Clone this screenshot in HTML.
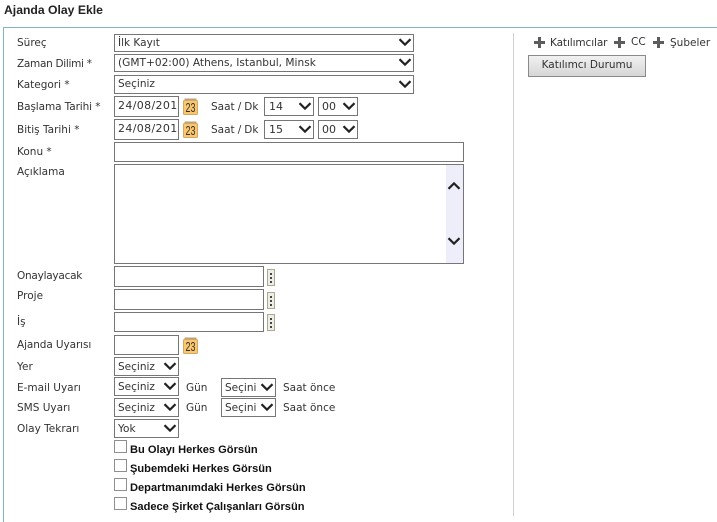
<!DOCTYPE html>
<html><head><meta charset="utf-8"><style>
html,body{margin:0;padding:0;background:#fff;width:717px;height:522px;overflow:hidden}
body{position:relative;font-family:"DejaVu Sans","Liberation Sans",sans-serif;font-size:10.5px;color:#333}
.a{position:absolute;white-space:nowrap;line-height:14px;margin-top:1px}
svg.a{margin-top:0}
.b{position:absolute;box-sizing:border-box;border:1px solid #767676;background:#fff;color:#333;white-space:nowrap;padding-left:3px;padding-top:1px;overflow:hidden}
.b svg{position:absolute;right:1px;top:50%;margin-top:-5px}
.l{left:17px}
.c{position:absolute;box-sizing:border-box;width:13px;height:13px;border:1px solid #8f8f8f;left:114px;background:#fff}
.k{position:absolute;left:130px;font-weight:bold;color:#111;white-space:nowrap;line-height:14px;font-family:"Liberation Sans",sans-serif;font-size:11.1px;margin-top:1px}
</style></head><body>
<svg width="0" height="0" style="position:absolute"><defs>
<symbol id="v" viewBox="0 0 14 8"><path d="M1.5 1.2 7 6.6 12.5 1.2" fill="none" stroke="#222" stroke-width="2.2"/></symbol>
<symbol id="cal" viewBox="0 0 15 17"><rect x="1.5" y="0.5" width="12" height="3" fill="#b9a27f"/><rect x="0.5" y="2.5" width="14" height="14" rx="1" fill="#fbc76e" stroke="#d3a860"/><text x="7.5" y="14" text-anchor="middle" font-family="Liberation Sans" font-size="13" textLength="10" lengthAdjust="spacingAndGlyphs" fill="#333">23</text></symbol>
<symbol id="dots" viewBox="0 0 8 17"><rect x=".5" y=".5" width="7" height="16" fill="#eeeee6" stroke="#a9a98f"/><rect x="3" y="4" width="2" height="2" fill="#444"/><rect x="3" y="8" width="2" height="2" fill="#444"/><rect x="3" y="12" width="2" height="2" fill="#444"/></symbol>
<symbol id="plus" viewBox="0 0 11 11"><path d="M4 0h3v4h4v3H7v4H4V7H0V4h4z" fill="#5c5c5c"/></symbol>
</defs></svg>

<div class="a" style="left:4px;top:2px;font-family:'Liberation Sans',sans-serif;font-weight:bold;font-size:12.2px;color:#222">Ajanda Olay Ekle</div>
<div style="position:absolute;left:3px;top:27px;width:714px;height:1px;background:#7fb6c2"></div>
<div style="position:absolute;left:3px;top:27px;width:1px;height:495px;background:#7fb6c2"></div>
<div style="position:absolute;left:513px;top:33px;width:1px;height:483px;background:#d0d0d0"></div>

<div class="a l" style="top:35px">Süreç</div>
<div class="a l" style="top:56px;letter-spacing:-.3px">Zaman Dilimi *</div>
<div class="a l" style="top:77px">Kategori *</div>
<div class="a l" style="top:99px;letter-spacing:-.1px">Başlama Tarihi *</div>
<div class="a l" style="top:122px">Bitiş Tarihi *</div>
<div class="a l" style="top:144px">Konu *</div>
<div class="a l" style="top:164px">Açıklama</div>
<div class="a l" style="top:268px;letter-spacing:-.25px">Onaylayacak</div>
<div class="a l" style="top:288px">Proje</div>
<div class="a l" style="top:314px">İş</div>
<div class="a l" style="top:337px;letter-spacing:-.1px">Ajanda Uyarısı</div>
<div class="a l" style="top:359px">Yer</div>
<div class="a l" style="top:380px">E-mail Uyarı</div>
<div class="a l" style="top:400px">SMS Uyarı</div>
<div class="a l" style="top:421px">Olay Tekrarı</div>

<div class="b" style="left:114px;top:34px;width:300px;height:18px;line-height:15px">İlk Kayıt<svg width="14" height="8"><use href="#v"/></svg></div>
<div class="b" style="left:114px;top:54px;width:300px;height:18px;line-height:15px;font-size:10.6px">(GMT+02:00) Athens, Istanbul, Minsk<svg width="14" height="8"><use href="#v"/></svg></div>
<div class="b" style="left:114px;top:75px;width:300px;height:19px;line-height:15px">Seçiniz<svg width="14" height="8"><use href="#v"/></svg></div>

<div class="b" style="left:114px;top:96px;width:65px;height:21px;line-height:16px;font-size:11px;letter-spacing:.35px;color:#333">24/08/201</div>
<svg class="a" style="left:183px;top:98px" width="15" height="17"><use href="#cal"/></svg>
<div class="a" style="left:211px;top:99px;word-spacing:-.3px">Saat / Dk</div>
<div class="b" style="left:264px;top:97px;width:50px;height:19px;line-height:15px;font-size:11px;padding-left:4px">14<svg width="14" height="8"><use href="#v"/></svg></div>
<div class="b" style="left:318px;top:97px;width:40px;height:19px;line-height:15px;font-size:11px">00<svg width="14" height="8"><use href="#v"/></svg></div>

<div class="b" style="left:114px;top:119px;width:65px;height:21px;line-height:16px;font-size:11px;letter-spacing:.35px;color:#333">24/08/201</div>
<svg class="a" style="left:183px;top:121px" width="15" height="17"><use href="#cal"/></svg>
<div class="a" style="left:211px;top:122px;word-spacing:-.3px">Saat / Dk</div>
<div class="b" style="left:264px;top:120px;width:50px;height:19px;line-height:15px;font-size:11px;padding-left:4px">15<svg width="14" height="8"><use href="#v"/></svg></div>
<div class="b" style="left:318px;top:120px;width:40px;height:19px;line-height:15px;font-size:11px">00<svg width="14" height="8"><use href="#v"/></svg></div>

<div class="b" style="left:114px;top:142px;width:350px;height:20px"></div>
<div class="b" style="left:114px;top:164px;width:350px;height:100px">
<div style="position:absolute;right:0;top:0;width:17px;height:98px;background:#eeeefb"></div>
<svg style="position:absolute;right:2px;top:17px;margin:0" width="14" height="8"><g transform="matrix(1 0 0 -1 0 8)"><use href="#v"/></g></svg>
<svg style="position:absolute;right:2px;top:72px;margin:0" width="14" height="8"><use href="#v"/></svg>
</div>

<div class="b" style="left:114px;top:266px;width:150px;height:21px"></div>
<svg class="a" style="left:267px;top:269px" width="8" height="17"><use href="#dots"/></svg>
<div class="b" style="left:114px;top:289px;width:150px;height:21px"></div>
<svg class="a" style="left:267px;top:292px" width="8" height="17"><use href="#dots"/></svg>
<div class="b" style="left:114px;top:312px;width:150px;height:20px"></div>
<svg class="a" style="left:267px;top:314px" width="8" height="17"><use href="#dots"/></svg>

<div class="b" style="left:114px;top:335px;width:65px;height:20px"></div>
<svg class="a" style="left:183px;top:337px" width="15" height="17"><use href="#cal"/></svg>

<div class="b" style="left:114px;top:357px;width:65px;height:19px;line-height:17px">Seçiniz<svg width="14" height="8"><use href="#v"/></svg></div>
<div class="b" style="left:114px;top:377px;width:65px;height:19px;line-height:17px">Seçiniz<svg width="14" height="8"><use href="#v"/></svg></div>
<div class="a" style="left:186px;top:380px">Gün</div>
<div class="b" style="left:221px;top:378px;width:55px;height:19px;line-height:17px">Seçini<svg width="14" height="8"><use href="#v"/></svg></div>
<div class="a" style="left:283px;top:380px">Saat önce</div>
<div class="b" style="left:114px;top:398px;width:65px;height:19px;line-height:17px">Seçiniz<svg width="14" height="8"><use href="#v"/></svg></div>
<div class="a" style="left:186px;top:400px">Gün</div>
<div class="b" style="left:221px;top:398px;width:55px;height:19px;line-height:17px">Seçini<svg width="14" height="8"><use href="#v"/></svg></div>
<div class="a" style="left:283px;top:400px">Saat önce</div>
<div class="b" style="left:114px;top:419px;width:65px;height:19px;line-height:17px">Yok<svg width="14" height="8"><use href="#v"/></svg></div>

<div class="c" style="top:440px"></div><div class="k" style="top:442px">Bu Olayı Herkes Görsün</div>
<div class="c" style="top:459px"></div><div class="k" style="top:461px">Şubemdeki Herkes Görsün</div>
<div class="c" style="top:478px"></div><div class="k" style="top:480px">Departmanımdaki Herkes Görsün</div>
<div class="c" style="top:497px"></div><div class="k" style="top:499px">Sadece Şirket Çalışanları Görsün</div>

<svg class="a" style="left:534px;top:37px" width="11" height="11"><use href="#plus"/></svg>
<div class="a" style="left:550px;top:35px;letter-spacing:-.1px">Katılımcılar</div>
<svg class="a" style="left:614px;top:37px" width="11" height="11"><use href="#plus"/></svg>
<div class="a" style="left:631px;top:34px">CC</div>
<svg class="a" style="left:653px;top:37px" width="11" height="11"><use href="#plus"/></svg>
<div class="a" style="left:670px;top:35px">Şubeler</div>
<div style="position:absolute;box-sizing:border-box;left:528px;top:55px;width:118px;height:22px;border:1px solid #8a8a8a;background:linear-gradient(#f1f1f1,#d6d6d6);text-align:center;line-height:19px;color:#333">Katılımcı Durumu</div>
</body></html>
